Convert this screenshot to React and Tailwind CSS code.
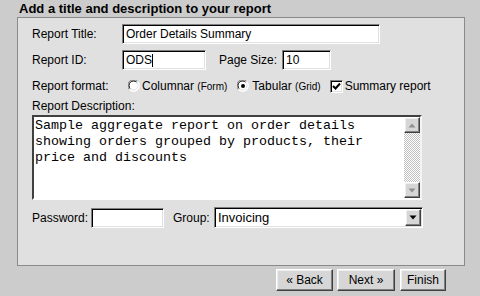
import React from "react";

const sunken =
  "bg-white border border-t-[#808080] border-l-[#808080] border-b-white border-r-white shadow-[inset_1px_1px_0_#000,inset_-1px_-1px_0_#e0e0e0]";
const raised =
  "bg-[#d6d6d6] border border-t-white border-l-white border-b-[#404040] border-r-[#404040] shadow-[inset_-1px_-1px_0_#808080,inset_1px_1px_0_#eeeeee]";

function Field({ w, value, caret }) {
  return (
    <div className={`${sunken} h-[20px] flex items-center pl-[3px] text-[12px] leading-none`} style={{ width: w }}>
      <span>{value}</span>
      {caret && <span className="inline-block w-px h-[13px] bg-black" />}
    </div>
  );
}

function Radio({ checked }) {
  return (
    <svg width="12" height="12" viewBox="0 0 12 12" className="shrink-0">
      <circle cx="6" cy="6" r="5.5" fill="#ffffff" />
      <path d="M1.4 9.6 A5.2 5.2 0 0 1 9.6 1.4" fill="none" stroke="#808080" strokeWidth="1" />
      <path d="M2.3 8.7 A4.1 4.1 0 0 1 8.7 2.3" fill="none" stroke="#000000" strokeWidth="1" />
      <path d="M9.6 1.4 A5.2 5.2 0 0 1 1.4 9.6" fill="none" stroke="#ffffff" strokeWidth="1" />
      <path d="M8.7 2.3 A4.1 4.1 0 0 1 2.3 8.7" fill="none" stroke="#e0e0e0" strokeWidth="1" />
      {checked && <circle cx="6" cy="6" r="2" fill="#000" />}
    </svg>
  );
}

function Checkbox() {
  return (
    <div className={`${sunken} w-[13px] h-[13px] shrink-0 flex items-center justify-center`}>
      <svg width="9" height="9" viewBox="0 0 9 9">
        <path d="M1 4 L3.5 6.5 L8 1.5" fill="none" stroke="#000" strokeWidth="2" />
      </svg>
    </div>
  );
}

export default function App() {
  return (
    <div
      className="w-[480px] h-[296px] bg-[#cccccc] text-black overflow-hidden"
      style={{ fontFamily: '"Liberation Sans", Arial, sans-serif' }}
    >
      <div className="h-[17px] pl-[19px] text-[13px] leading-[17px] font-bold">
        Add a title and description to your report
      </div>
      <div className="ml-[17px] w-[448px] h-[249px] bg-[#e0e0e0] border border-[#8a8a8a] flex flex-col pl-[14px] text-[12px]">
        {/* Row 1 */}
        <div className="mt-[6px] flex items-center h-[20px]">
          <div className="w-[90px]">Report Title:</div>
          <Field w={258} value="Order Details Summary" />
        </div>
        {/* Row 2 */}
        <div className="mt-[6px] flex items-center h-[20px]">
          <div className="w-[90px]">Report ID:</div>
          <Field w={84} value="ODS" caret />
          <div className="ml-[13px] w-[63px]">Page Size:</div>
          <Field w={49} value="10" />
        </div>
        {/* Row 3 */}
        <div className="mt-[6px] flex items-center h-[20px]">
          <div className="w-[96px]">Report format:</div>
          <Radio />
          <span className="ml-[2px]">
            Columnar <span className="text-[10px]">(Form)</span>
          </span>
          <div className="ml-[10px]">
            <Radio checked />
          </div>
          <span className="ml-[3px]">
            Tabular <span className="text-[10px]">(Grid)</span>
          </span>
          <div className="ml-[9px]">
            <Checkbox />
          </div>
          <span className="ml-[2px]">Summary report</span>
        </div>
        {/* Description */}
        <div className="mt-[3px] h-[15px] leading-[15px]">Report Description:</div>
        <div className="mt-[1px] w-[390px] h-[85px] border-2 border-t-[#404040] border-l-[#404040] border-b-white border-r-[#f4f4f4] bg-white flex">
          <div
            className="flex-1 pl-[1px] pt-[1px] text-[13.33px] leading-[16px] whitespace-pre"
            style={{ fontFamily: '"Liberation Mono", "Courier New", monospace' }}
          >
            {"Sample aggregate report on order details\nshowing orders grouped by products, their\nprice and discounts"}
          </div>
          <div className="w-[16px] flex flex-col bg-[repeating-conic-gradient(#c0c0c0_0%_25%,#ffffff_0%_50%)] bg-[length:2px_2px]">
            <div className={`${raised} h-[16px] flex items-center justify-center`}>
              <svg width="8" height="5" viewBox="0 0 8 5">
                <path d="M4 0.5 L7.5 4.5 L0.5 4.5 Z" fill="#909090" />
              </svg>
            </div>
            <div className="flex-1" />
            <div className={`${raised} h-[16px] flex items-center justify-center`}>
              <svg width="8" height="5" viewBox="0 0 8 5">
                <path d="M0.5 0.5 L7.5 0.5 L4 4.5 Z" fill="#909090" />
              </svg>
            </div>
          </div>
        </div>
        {/* Password row */}
        <div className="mt-[7px] flex items-center h-[21px]">
          <div className="w-[59px]">Password:</div>
          <Field w={73} value="" />
          <div className="ml-[9px] w-[41px]">Group:</div>
          <div className={`${sunken} w-[209px] h-[21px] flex items-center pl-[3px] text-[13px]`}>
            <span className="flex-1">Invoicing</span>
            <div className={`${raised} w-[16px] h-[17px] mr-px flex items-center justify-center`}>
              <svg width="8" height="5" viewBox="0 0 8 5">
                <path d="M0.5 0.5 L7.5 0.5 L4 4.5 Z" fill="#000" />
              </svg>
            </div>
          </div>
        </div>
      </div>
      {/* Buttons */}
      <div className="mt-[3px] flex pl-[276px] gap-[4px] text-[12px]">
        <div className={`${raised} w-[57px] h-[22px] flex items-center justify-center`}>« Back</div>
        <div className={`${raised} w-[58px] h-[22px] flex items-center justify-center`}>Next »</div>
        <div className={`${raised} ml-px w-[46px] h-[22px] flex items-center justify-center`}>Finish</div>
      </div>
    </div>
  );
}
